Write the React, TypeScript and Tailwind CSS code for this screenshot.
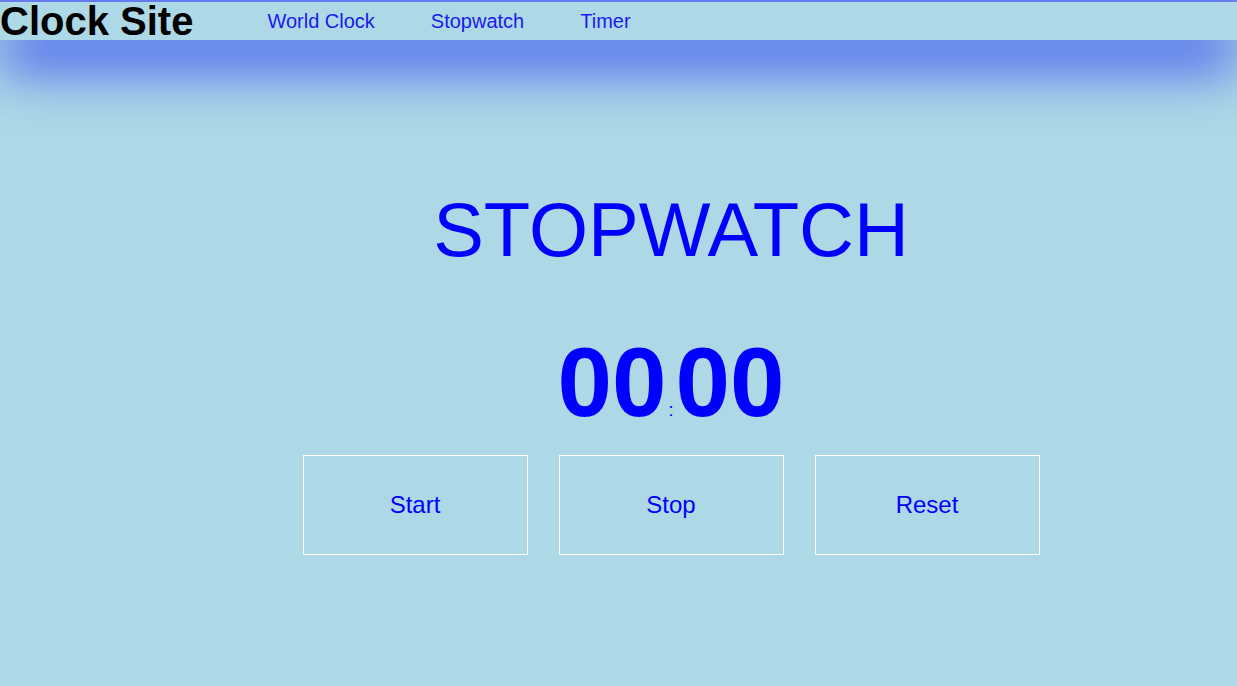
export default function App() {
  const font = { fontFamily: '"Liberation Sans", Arial, sans-serif' };
  return (
    <div className="min-h-[686px] bg-[#add8e6]" style={font}>
      <div className="h-[2px] bg-[#7086ec]" />
      {/* top bar */}
      <header className="relative z-10 flex h-[38px] items-center bg-[#add8e6] shadow-[0_26px_56px_#2a42f0]">
        <h1 className="text-[40px] font-bold leading-none text-black">Clock Site</h1>
        <nav className="ml-[46px] flex items-center text-[20px] text-[#1a1aee]">
          <a className="px-[28px]" href="#">World Clock</a>
          <a className="px-[28px]" href="#">Stopwatch</a>
          <a className="px-[28px]" href="#">Timer</a>
        </nav>
      </header>

      <main className="flex flex-col items-center pl-[105px]">
        <h2 className="mt-[152px] text-[76px] leading-none text-[#0000ff]">STOPWATCH</h2>
        <div className="mt-[65px] flex items-baseline font-bold leading-none text-[#0000ff]">
          <span className="text-[98px]">00</span>
          <span className="px-[2px] text-[18px] font-normal">:</span>
          <span className="text-[98px]">00</span>
        </div>
        <div className="mt-[24px] flex gap-[31px]">
          {["Start", "Stop", "Reset"].map((b) => (
            <button
              key={b}
              className="h-[100px] w-[225px] border border-white text-[24px] text-[#0000ff]"
            >
              {b}
            </button>
          ))}
        </div>
      </main>
    </div>
  );
}
